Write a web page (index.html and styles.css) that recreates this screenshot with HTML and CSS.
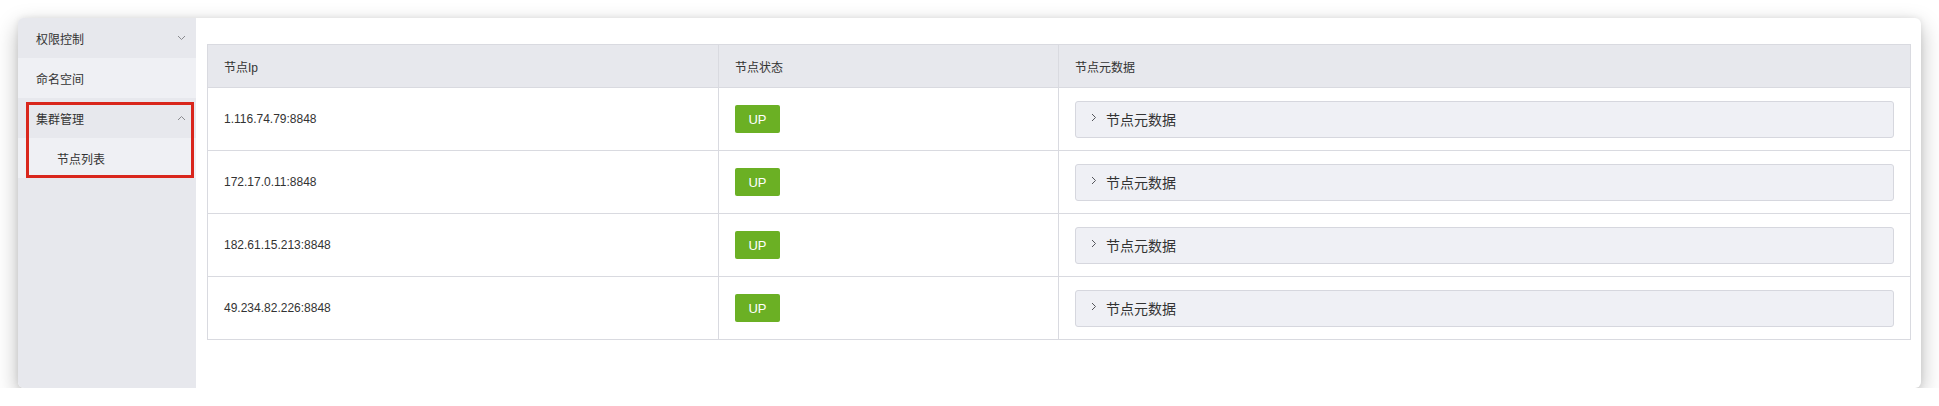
FILE: index.html
```html
<!DOCTYPE html>
<html lang="zh-CN">
<head>
<meta charset="utf-8">
<title>节点列表</title>
<link rel="stylesheet" href="styles.css">
</head>
<body>
<div class="window">
  <aside class="sidebar">
    <div class="menu-item menu-head">
      <span>权限控制</span>
      <svg class="chev" width="9" height="6" viewBox="0 0 9 6"><path d="M1 1 L4.5 4.5 L8 1" fill="none" stroke="#8a8b90" stroke-width="1"/></svg>
    </div>
    <div class="menu-item menu-leaf">命名空间</div>
    <div class="menu-group">
      <div class="menu-item menu-head">
        <span>集群管理</span>
        <svg class="chev" width="9" height="6" viewBox="0 0 9 6"><path d="M1 5 L4.5 1.5 L8 5" fill="none" stroke="#8a8b90" stroke-width="1"/></svg>
      </div>
      <div class="menu-item menu-sub">节点列表</div>
    </div>
  </aside>
  <main class="content">
    <table class="nodes">
      <colgroup>
        <col class="c-ip">
        <col class="c-state">
        <col class="c-meta">
      </colgroup>
      <thead>
        <tr><th>节点Ip</th><th>节点状态</th><th>节点元数据</th></tr>
      </thead>
      <tbody>
        <tr>
          <td>1.116.74.79:8848</td>
          <td><span class="badge">UP</span></td>
          <td><div class="meta"><svg class="mchev" width="6" height="9" viewBox="0 0 6 9"><path d="M1 1 L4.5 4.5 L1 8" fill="none" stroke="#55565c" stroke-width="1"/></svg><span>节点元数据</span></div></td>
        </tr>
        <tr>
          <td>172.17.0.11:8848</td>
          <td><span class="badge">UP</span></td>
          <td><div class="meta"><svg class="mchev" width="6" height="9" viewBox="0 0 6 9"><path d="M1 1 L4.5 4.5 L1 8" fill="none" stroke="#55565c" stroke-width="1"/></svg><span>节点元数据</span></div></td>
        </tr>
        <tr>
          <td>182.61.15.213:8848</td>
          <td><span class="badge">UP</span></td>
          <td><div class="meta"><svg class="mchev" width="6" height="9" viewBox="0 0 6 9"><path d="M1 1 L4.5 4.5 L1 8" fill="none" stroke="#55565c" stroke-width="1"/></svg><span>节点元数据</span></div></td>
        </tr>
        <tr>
          <td>49.234.82.226:8848</td>
          <td><span class="badge">UP</span></td>
          <td><div class="meta"><svg class="mchev" width="6" height="9" viewBox="0 0 6 9"><path d="M1 1 L4.5 4.5 L1 8" fill="none" stroke="#55565c" stroke-width="1"/></svg><span>节点元数据</span></div></td>
        </tr>
      </tbody>
    </table>
  </main>
</div>
</body>
</html>
```
FILE: styles.css
```css
* { box-sizing: border-box; }
html, body {
  margin: 0;
  padding: 0;
  background: #ffffff;
}
body {
  font-family: "Liberation Sans", Arial, "Noto Sans CJK SC", sans-serif;
  color: #333333;
  padding: 18px 0 0 18px;
}
.window {
  width: 1903px;
  height: 370px;
  display: flex;
  border-radius: 6px;
  overflow: hidden;
  background: #ffffff;
  box-shadow: 0 8px 22px rgba(0, 0, 0, 0.28), 0 0 6px rgba(0, 0, 0, 0.08);
}
.sidebar {
  width: 178px;
  flex: none;
  background: #e7e8ed;
}
.menu-item {
  height: 40px;
  display: flex;
  align-items: center;
  justify-content: space-between;
  padding: 0 10px 0 18px;
  font-size: 12px;
  color: #333333;
}
.menu-head { background: #e7e8ed; }
.menu-leaf { background: #eff0f4; }
.menu-sub {
  background: #eff0f4;
  padding-left: 39px;
}
.chev { display: block; }
.menu-group {
  position: relative;
}
.menu-group::after {
  content: "";
  position: absolute;
  top: 4px;
  left: 8px;
  right: 2px;
  bottom: 0;
  border: 3px solid #d9261c;
  pointer-events: none;
}
.content {
  flex: 1;
  padding: 26px 11px 0 11px;
}
.nodes {
  width: 1703px;
  border-collapse: collapse;
  table-layout: fixed;
  font-size: 12px;
}
.c-ip { width: 511px; }
.c-state { width: 340px; }
.c-meta { width: 852px; }
.nodes th,
.nodes td {
  border: 1px solid #d9dae0;
  padding: 0 16px;
  text-align: left;
}
.nodes th {
  height: 43px;
  background: #e7e8ed;
  font-weight: normal;
  color: #333333;
}
.nodes td {
  height: 63px;
  color: #333333;
}
.badge {
  display: inline-flex;
  align-items: center;
  justify-content: center;
  width: 45px;
  height: 28px;
  border-radius: 2px;
  background: #6bb024;
  color: #ffffff;
  font-size: 13px;
  font-weight: 500;
  vertical-align: middle;
}
.meta {
  height: 37px;
  display: flex;
  align-items: center;
  gap: 9px;
  padding-left: 15px;
  background: #eff0f5;
  border: 1px solid #d6d7de;
  border-radius: 3px;
  font-size: 14px;
  color: #333333;
}
.mchev {
  display: block;
  margin-top: -3px;
}
```
